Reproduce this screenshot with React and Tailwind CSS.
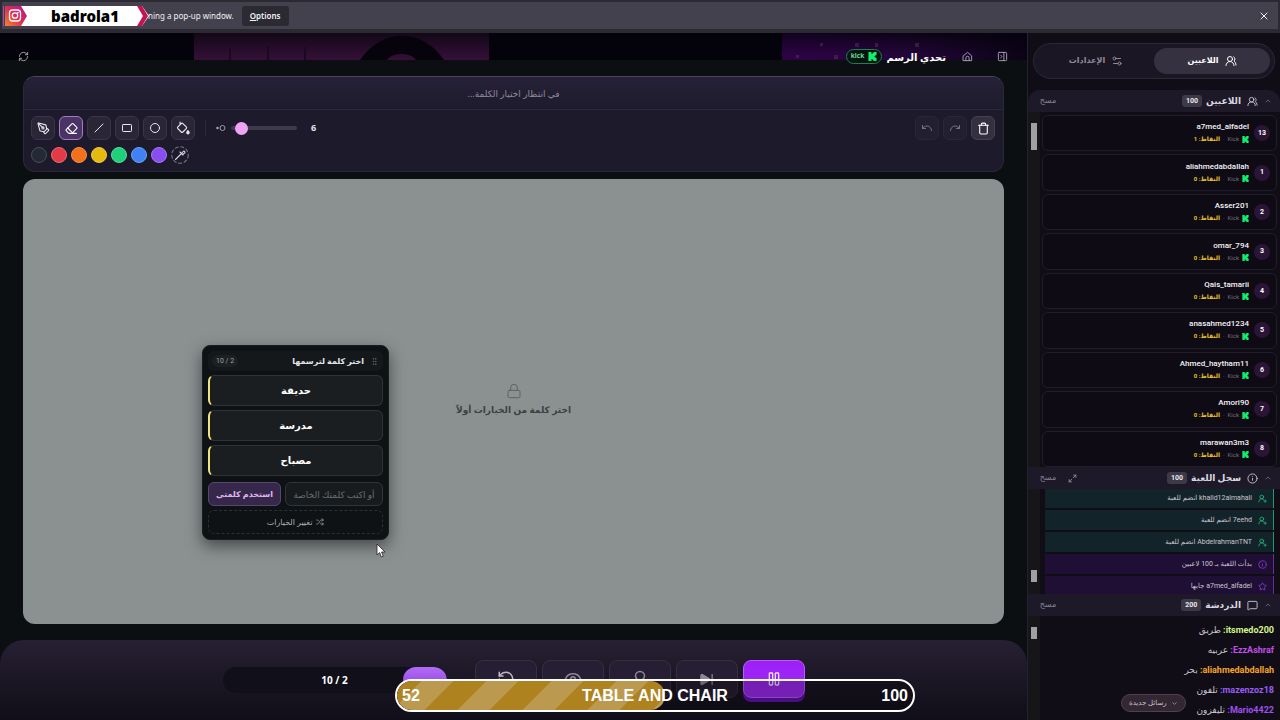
import React from "react";
import {
  ChevronDown, ChevronUp, Eraser, Eye, GripVertical, Info, Lightbulb, Lock, Maximize2,
  MessageSquare, PanelRightClose, Pause, PenTool, Redo, RefreshCw, RotateCcw,
  Settings2, Shuffle, SkipForward, Star, Trash, Undo, UserRoundPlus, UsersRound, X,
} from "lucide-react";

const players = [
  ["13", "a7med_alfadel", 1],
  ["1", "aliahmedabdallah", 0],
  ["2", "Asser201", 0],
  ["3", "omar_794", 0],
  ["4", "Qais_tamarii", 0],
  ["5", "anasahmed1234", 0],
  ["6", "Ahmed_haytham11", 0],
  ["7", "Amori90", 0],
  ["8", "marawan3m3", 0],
];

const logs = [
  ["join", "khalid12almahali", "انضم للعبة"],
  ["join", "7eehd", "انضم للعبة"],
  ["join", "AbdelrahmanTNT", "انضم للعبة"],
  ["info", "", "بدأت اللعبة بـ 100 لاعبين"],
  ["star", "a7med_alfadel", "جابها"],
];

const chat = [
  ["itsmedo200", "طريق", "text-[#d4f58a]"],
  ["EzzAshraf", "عربيه", "text-[#c04fe8]"],
  ["aliahmedabdallah", "بحر", "text-[#f5a32a]"],
  ["mazenzoz18", "تلفون", "text-[#9a5cf5]"],
  ["Mario4422", "تليفزون", "text-[#a050f0]"],
];

const swatches = [
  ["أسود", "bg-[#232a35] border-[#46505a]"],
  ["أحمر", "bg-[#e23a46] border-[#ea6a76]"],
  ["برتقالي", "bg-[#f2701c] border-[#f0934e]"],
  ["أصفر", "bg-[#e6bb0d] border-[#e9cb50]"],
  ["أخضر", "bg-[#1fd07a] border-[#55dc9c]"],
  ["أزرق", "bg-[#3f82f3] border-[#6ea2f6]"],
  ["بنفسجي", "bg-[#8a4df0] border-[#a47af4]"],
];

function Draw({ size = 14, children, className }) {
  return (
    <svg width={size} height={size} viewBox="0 0 24 24" fill="none" stroke="currentColor" strokeWidth="2" strokeLinecap="round" strokeLinejoin="round" className={className} aria-hidden="true">
      {children}
    </svg>
  );
}

const tools = [
  ["قلم", <PenTool size={13} />],
  ["ممحاة", <Eraser size={13} />],
  ["خط", <Draw size={12}><path d="M4 20 20 4" /></Draw>],
  ["مستطيل", <Draw size={12}><rect x="3" y="5" width="18" height="14" rx="1.5" /></Draw>],
  ["دائرة", <Draw size={12}><circle cx="12" cy="12" r="9" /></Draw>],
  ["تعبئة", <Draw><path d="M7 2v3.500M3.200 10.200 9 4.400a2 2 0 0 1 2.800 0l5.800 5.800a2 2 0 0 1 0 2.800l-5.800 5.800a2 2 0 0 1-2.800 0L3.200 13a2 2 0 0 1 0-2.800Z" /><path d="M20.500 16.500s-2 2.200-2 3.600a2 2 0 0 0 4 0c0-1.400-2-3.600-2-3.600Z" fill="currentColor" /></Draw>],
];

function KickMark({ size }) {
  return (
    <svg width={size} height={size} viewBox="0 0 10 10" fill="#10ee6e" className="shrink-0" aria-hidden="true">
      <path d="M.5 0h3.400v2.300h1.100V1.100h1.100V0h3.400v3.400H8.400v1.100H7.300v1h1.100v1.100h1.100V10H6.100V8.900H5V7.700H3.900V10H.5z" />
    </svg>
  );
}

function SectionHead({ icon, title, count, expand, className = "" }) {
  return (
    <header className={"flex h-[22px] shrink-0 items-center gap-1 bg-[#1d1928] px-2 " + className}>
      <button aria-label={"طي " + title} className="text-[#85808f]"><ChevronUp size={8} /></button>
      <span className="ms-0.5 text-[#c9c6d0]">{icon}</span>
      <h2 className="ms-0.5 text-[9px] font-bold leading-4 text-[#dad7e0]">{title}</h2>
      <span className="rounded-[3px] bg-[#3d3946] px-1 text-[7px] font-bold leading-3 text-[#eceaf0]">{count}</span>
      <span className="flex-1" />
      {expand && <button aria-label="تكبير" className="me-1 text-[#a5a1ae]"><Maximize2 size={9} /></button>}
      <button className="w-6 text-center text-[8px] leading-3 text-[#8a8594]">مسح</button>
    </header>
  );
}

function Gutter({ className }) {
  return (
    <div className={"flex w-3 shrink-0 flex-col items-center bg-[#161518] " + className}>
      <span className="h-full max-h-[var(--thumb)] w-[6px] bg-[#a09fa2]" />
    </div>
  );
}

function BrowserBar() {
  return (
    <div className="flex h-[33px] shrink-0 items-center border-x-2 border-b-4 border-t-2 border-[#2b2a33] bg-[#42414d] pe-2 text-[8px] text-[#f1f1f5]">
      <div className="relative flex h-5 w-[142px] items-center">
        <svg viewBox="0 0 148 22" className="absolute inset-y-[-1px] left-0 z-10 h-[22px] w-[148px]" aria-hidden="true">
          <defs>
            <linearGradient id="insta" x1="0" y1="1" x2="1" y2="0">
              <stop offset="0" stopColor="#f58529" />
              <stop offset=".5" stopColor="#dd2a55" />
              <stop offset="1" stopColor="#b4159a" />
            </linearGradient>
          </defs>
          <path d="M10 1h130l7 10-7 10H10z" fill="#fff" />
          <path d="M135 1h5l6 10-6 10h-5l6-10z" fill="#c41359" />
          <path d="M3 1h16l6 10-6 10H3z" fill="url(#insta)" />
          <path d="M1 1h1v20H1z" fill="#9f4bb8" />
          <rect x="7.500" y="5" width="11" height="11" rx="3" fill="none" stroke="#fff" strokeWidth="1.300" />
          <circle cx="13" cy="10.500" r="2.700" fill="none" stroke="#fff" strokeWidth="1.300" />
          <circle cx="16" cy="7.600" r=".8" fill="#fff" />
        </svg>
        <strong className="relative z-10 w-full ps-6 text-center text-[15px] font-black leading-5 text-black">badrola1</strong>
      </div>
      <span className="ms-1">ning a pop-up window.</span>
      <button className="ms-2 h-5 rounded-[3px] bg-[#2b2a33] px-2 font-semibold"><u>O</u>ptions</button>
      <span className="flex-1" />
      <button aria-label="Close"><X size={12} /></button>
    </div>
  );
}

function Banner() {
  return (
    <svg viewBox="0 0 1027 27" preserveAspectRatio="none" className="absolute inset-x-0 top-0 h-[27px] w-full" aria-hidden="true">
      <defs>
        <linearGradient id="glow" x1="0" y1="0" x2="0" y2="1">
          <stop offset="0" stopColor="#120816" />
          <stop offset="1" stopColor="#351038" />
        </linearGradient>
        <linearGradient id="glow2" x1="0" y1="0" x2="1" y2="0">
          <stop offset="0" stopColor="#2d0345" />
          <stop offset=".5" stopColor="#24063a" />
          <stop offset="1" stopColor="#0a0316" />
        </linearGradient>
        <linearGradient id="shade" x1="0" y1="0" x2="0" y2="1">
          <stop offset="0" stopColor="#04020a" stopOpacity=".7" />
          <stop offset=".8" stopColor="#04020a" stopOpacity="0" />
        </linearGradient>
      </defs>
      <rect width="1027" height="27" fill="#04020a" />
      <rect x="194" width="295" height="27" fill="url(#glow)" />
      <path d="M230 15v12M268 13v14M305 14v13" stroke="#1b0821" strokeWidth="2" />
      <path d="M360 27C372 10 386 3 402 3s30 7 42 24h-28c-5-8-24-8-29 0z" fill="#07030c" />
      <rect x="782" width="245" height="27" fill="url(#glow2)" />
      <rect x="782" width="245" height="27" fill="url(#shade)" />
      <g fill="#61346e" opacity=".45">
        <rect x="820" y="10" width="3" height="3" /><rect x="796" y="22" width="3" height="3" />
        <rect x="855" y="10" width="4" height="4" /><rect x="875" y="10" width="3" height="4" />
        <rect x="915" y="10" width="4" height="4" /><rect x="834" y="22" width="4" height="4" />
      </g>
    </svg>
  );
}

function Toolbar() {
  return (
    <section className="overflow-hidden rounded-xl border border-[#2c283b] border-t-[#4b4562] bg-[#1d1a2b]">
      <p dir="rtl" className="flex h-[33px] items-center justify-center border-b border-[#2c283b] bg-gradient-to-b from-[#262137] to-[#1e1b2d] pt-0.5 text-[9px] text-[#8f8a9b]">في انتظار اختيار الكلمة...</p>
      <div className="flex h-9 items-center gap-1 pe-2 ps-[7px]">
        {tools.map(([name, icon], i) => (
          <button key={name} aria-label={name} aria-pressed={i === 1} className={i === 1
            ? "grid size-6 place-items-center rounded-md border border-[#a77ac6] bg-[#4a3365] text-white"
            : "grid size-6 place-items-center rounded-md border border-[#3a3547] bg-[#2a2637] text-[#e8e6ee]"}>{icon}</button>
        ))}
        <span className="mx-1.5 h-4 w-px bg-[#2e2a3c]" />
        <label className="flex items-center gap-[5px] text-[#a19cad]">
          <svg width="10" height="8" viewBox="0 0 10 8" aria-hidden="true">
            <circle cx="1.500" cy="4" r="1.300" fill="currentColor" />
            <circle cx="6.500" cy="4" r="2.500" fill="none" stroke="currentColor" />
          </svg>
          <input type="range" min="1" max="60" defaultValue="6" aria-label="حجم الفرشاة" className="h-1 w-[66px] appearance-none rounded-full bg-[#3f3a4b] [&::-webkit-slider-thumb]:size-[13px] [&::-webkit-slider-thumb]:appearance-none [&::-webkit-slider-thumb]:rounded-full [&::-webkit-slider-thumb]:bg-[#efa3f5]" />
        </label>
        <output className="ms-2.5 text-[9px] font-bold text-[#e8e6ee]">6</output>
        <span className="flex-1" />
        <button aria-label="تراجع" className="grid size-6 place-items-center rounded-md border border-[#2b273a] bg-[#221f30] text-[#77728a]"><Undo size={12} /></button>
        <button aria-label="إعادة" className="grid size-6 place-items-center rounded-md border border-[#2b273a] bg-[#221f30] text-[#77728a]"><Redo size={12} /></button>
        <button aria-label="حذف" className="grid size-6 place-items-center rounded-md border border-[#464152] bg-[#34303f] text-white"><Trash size={13} /></button>
      </div>
      <div className="flex gap-1 px-[7px] pb-2 pt-px">
        {swatches.map(([name, tone]) => (
          <button key={name} aria-label={name} className={"size-4 rounded-full border " + tone} />
        ))}
        <button aria-label="لون مخصص" className="-my-px grid size-[18px] place-items-center text-[#d8d5df]">
          <Draw size={18}>
            <circle cx="12" cy="12" r="11" strokeWidth="1.500" strokeDasharray="4 3.500" stroke="#77727f" />
            <path d="m6 18 8-8M12 8l4 4M14 10l2.500-3a1.500 1.500 0 0 1 2 2l-3 2.500" strokeWidth="1.500" />
          </Draw>
        </button>
      </div>
    </section>
  );
}

function WordPicker() {
  return (
    <form dir="rtl" onSubmit={(e) => e.preventDefault()} className="absolute left-[179px] top-[166px] flex w-[187px] flex-col gap-1 rounded-lg border border-[#191e21] bg-[#0e1214] p-[5px] shadow-[0_6px_16px_rgba(0,0,0,0.5)]">
      <header className="flex h-5 items-center gap-1.5 rounded-md bg-[#14181a] px-1">
        <GripVertical size={9} className="text-[#60656a]" />
        <h3 className="text-[8px] font-bold text-[#e4e6e8]">اختر كلمة لترسمها</h3>
        <span className="flex-1" />
        <span dir="ltr" className="rounded-full bg-[#1c2023] px-1 font-['Roboto',sans-serif] text-[7px] leading-3 text-[#9da0a4]">10 / 2</span>
      </header>
      {["حديقة", "مدرسة", "مصباح"].map((w) => (
        <button key={w} type="button" className="h-[31px] rounded-md border border-l-2 border-[#2e3337] border-l-[#f1e57d] bg-[#1a1e21] text-[10px] font-bold text-white">{w}</button>
      ))}
      <div className="mt-0.5 flex gap-1">
        <input aria-label="كلمتك الخاصة" placeholder="أو اكتب كلمتك الخاصة" className="h-6 w-[98px] rounded-md border border-[#30353a] bg-[#171b1e] px-1 text-center text-[9px] text-white placeholder:text-[#686d72]" />
        <button className="flex-1 rounded-md border border-[#594671] bg-[#36284a] text-[8px] font-bold text-[#e3b5f3]">استخدم كلمتي</button>
      </div>
      <button type="button" className="flex h-6 items-center justify-center gap-1 rounded-md border border-dashed border-[#2b3034] text-[8px] text-[#aeb1b5]"><Shuffle size={8} />تغيير الخيارات</button>
    </form>
  );
}

function Controls() {
  const item = "grid h-[38px] w-[62px] place-items-center rounded-lg border border-[#382e44] bg-[#261e32] ";
  return (
    <footer className="flex h-20 shrink-0 items-start justify-center gap-7 rounded-t-3xl bg-gradient-to-b from-[#272033] to-[#100e18] pt-5">
      <div className="relative mt-[7px] h-[26px] w-56 overflow-hidden rounded-full bg-[#110f19] text-center text-[10px] font-bold leading-[26px] text-white">
        <span className="absolute inset-y-0 right-0 w-[44px] rounded-full bg-gradient-to-b from-[#b36bf5] to-[#8a39de]" />
        <span className="relative">10 / 2</span>
      </div>
      <div className="flex gap-[5px]">
        <button aria-label="إعادة" className={item + "text-[#bdb7c4]"}><RotateCcw size={18} /></button>
        <button aria-label="إظهار" className={item + "text-[#8e8896]"}><Eye size={18} /></button>
        <button aria-label="تلميح" className={item + "text-[#8e8896]"}><Lightbulb size={18} /></button>
        <button aria-label="تخطي" className={item + "text-[#8e8896]"}><SkipForward size={15} fill="currentColor" /></button>
        <button aria-label="إيقاف" className="grid h-[38px] w-[62px] place-items-center rounded-lg border border-[#b75cff] bg-gradient-to-b from-[#9d1ff8] to-[#9d2cf0] text-[#f0ddff] shadow-[0_4px_0_#6510b0]"><Pause size={16} /></button>
      </div>
    </footer>
  );
}

function Sidebar() {
  return (
    <aside dir="rtl" className="flex w-[253px] shrink-0 flex-col border-e border-[#24222c] bg-[#100d17] font-['Roboto','DejaVu_Sans',sans-serif]">
      <nav className="mx-[5px] mb-[11px] mt-[10px] flex h-9 shrink-0 rounded-full border border-[#2d2838] bg-[#1a1624] p-1 text-[8px] font-bold">
        <button className="flex flex-1 items-center justify-center gap-1.5 rounded-full bg-[#363140] text-white">
          <UsersRound size={12} />اللاعبين
        </button>
        <button className="flex flex-1 items-center justify-center gap-1.5 text-[#8f8a9a]"><Settings2 size={12} />الإعدادات</button>
      </nav>

      <section className="flex min-h-0 flex-1 flex-col">
        <SectionHead className="rounded-t-xl" icon={<UsersRound size={11} />} title="اللاعبين" count="100" />
        <div className="flex min-h-0 flex-1">
          <ol className="flex min-h-0 flex-1 flex-col gap-[3px] pe-0.5 ps-[3px] pt-[3px]">
            {players.map(([rank, name, score]) => (
              <li key={name} className="flex min-h-0 flex-1 items-center gap-[5px] rounded-md border border-[#211d2a] bg-[#0f0b15] ps-1.5">
                <span className="grid size-4 shrink-0 place-items-center rounded-full bg-[#2a1536] text-[7px] font-bold text-white">{rank}</span>
                <div className="flex flex-col items-start">
                  <b className="text-[8px] font-medium leading-3 text-[#f4f2f7]">{name}</b>
                  <p className="flex items-center gap-[3px] text-[6px] leading-3 text-[#77727f]">
                    <KickMark size={7} /><span>Kick</span><span>·</span>
                    <span className="font-bold text-[#e5c02a]">النقاط: {score}</span>
                  </p>
                </div>
              </li>
            ))}
          </ol>
          <Gutter className="pt-[11px] [--thumb:27px]" />
        </div>
      </section>

      <section className="flex shrink-0 flex-col">
        <SectionHead icon={<Info size={11} />} title="سجل اللعبة" count="100" expand />
        <div className="flex h-[105px] overflow-hidden">
          <ul className="-mt-px flex flex-1 flex-col gap-0.5 pe-[5px] ps-1.5 text-[7px] text-[#c9c6d0]">
            {logs.map(([kind, name, text]) => (
              <li key={name + text} className={kind === "join"
                ? "flex h-5 shrink-0 items-center gap-1.5 border-r border-[#1e9b6c] bg-[#13232a] ps-1.5"
                : "flex h-5 shrink-0 items-center gap-1.5 border-r border-[#692da0] bg-[#1f0f35] ps-1.5"}>
                {kind === "join" && <UserRoundPlus size={9} className="text-[#20c585]" />}
                {kind === "info" && <Info size={9} className="text-[#9342db]" />}
                {kind === "star" && <Star size={9} className="text-[#9342db]" />}
                <span>{name && <bdi>{name}</bdi>} {text}</span>
              </li>
            ))}
          </ul>
          <Gutter className="pt-[81px] [--thumb:12px]" />
        </div>
      </section>

      <section className="relative flex shrink-0 flex-col">
        <SectionHead icon={<MessageSquare size={11} />} title="الدردشة" count="200" />
        <div className="flex h-[104px] overflow-hidden">
          <ul className="flex flex-1 flex-col pe-2 ps-1.5 pt-1 leading-5 text-[#c9c6d0]">
            {chat.map(([name, text, tone]) => (
              <li key={name} className="h-5 text-[9px]"><b className={tone}><bdi>{name}</bdi>:</b> {text}</li>
            ))}
          </ul>
          <Gutter className="pt-[11px] [--thumb:12px]" />
        </div>
        <button className="absolute bottom-2 left-[93px] flex h-[18px] items-center gap-1 rounded-full border border-[#51404f] bg-[#332734] px-[7px] text-[7px] text-[#cbc4ce]"><ChevronDown size={7} />رسائل جديدة</button>
      </section>
    </aside>
  );
}

export default function App() {
  return (
    <div className="relative flex h-screen flex-col overflow-hidden bg-[#0b0f11] font-['Noto_Sans','DejaVu_Sans',sans-serif]">
      <BrowserBar />
      <div className="flex min-h-0 flex-1">
        <main className="relative flex min-w-0 flex-1 flex-col">
          <Banner />
          <header dir="rtl" className="relative flex h-[43px] shrink-0 items-center gap-4 pe-[18px] ps-[19px] pt-1 text-[#aba6b3]">
            <div className="flex items-center gap-6">
              <button aria-label="إخفاء اللوحة"><PanelRightClose size={11} /></button>
              <a href="#home" aria-label="الرئيسية">
                <Draw size={11}><path d="M3 10.500 12 3l9 7.500V21H3zM8.500 21v-6a3.500 3.500 0 0 1 7 0v6" /></Draw>
              </a>
            </div>
            <div className="flex items-center gap-1">
              <h1 className="text-[10px] font-bold leading-4 text-white">تحدي الرسم</h1>
              <span className="flex h-[15px] items-center gap-1 rounded-full border border-[#1c8052] bg-[#06140f] px-1 text-[7px] font-semibold text-[#6ee8a8]"><KickMark size={9} />kick</span>
            </div>
            <span className="flex-1" />
            <button aria-label="تحديث"><RefreshCw size={11} /></button>
          </header>
          <div className="flex min-h-0 flex-1 flex-col gap-[7px] px-[23px] pb-4">
            <Toolbar />
            <div className="relative min-h-0 flex-1 rounded-xl bg-[#8b9090]">
              <div dir="rtl" className="flex h-full flex-col items-center justify-center gap-1 pb-1 text-[9px] font-bold text-[#3c4042]">
                <Lock size={16} strokeWidth={1.5} className="text-[#5d6263]" />
                <p>اختر كلمة من الخيارات أولاً</p>
              </div>
              <WordPicker />
              <svg width="10" height="15" viewBox="0 0 10 15" className="absolute left-[353px] top-[364px]" aria-hidden="true">
                <path d="M1 1v11l2.600-2.400L5.300 14l2-.8-1.800-4.200H9z" fill="#fff" stroke="#222" strokeWidth=".8" />
              </svg>
            </div>
          </div>
          <Controls />
        </main>
        <Sidebar />
      </div>
      <div className="absolute bottom-2 left-[395px] grid h-[33px] w-[520px] grid-cols-[1fr_auto_1fr] items-center overflow-hidden rounded-full border-2 border-white bg-black/25 px-[5px] font-['Liberation_Sans',sans-serif] text-base font-bold text-white">
        <span className="absolute inset-y-0 left-0 w-[52%] rounded-full bg-[repeating-linear-gradient(135deg,#ad821f_0_17px,#bb9a50_17px_40px,#ad821f_40px_46px)]" />
        <span className="relative">52</span>
        <span className="relative">TABLE AND CHAIR</span>
        <span className="relative text-end">100</span>
      </div>
    </div>
  );
}
